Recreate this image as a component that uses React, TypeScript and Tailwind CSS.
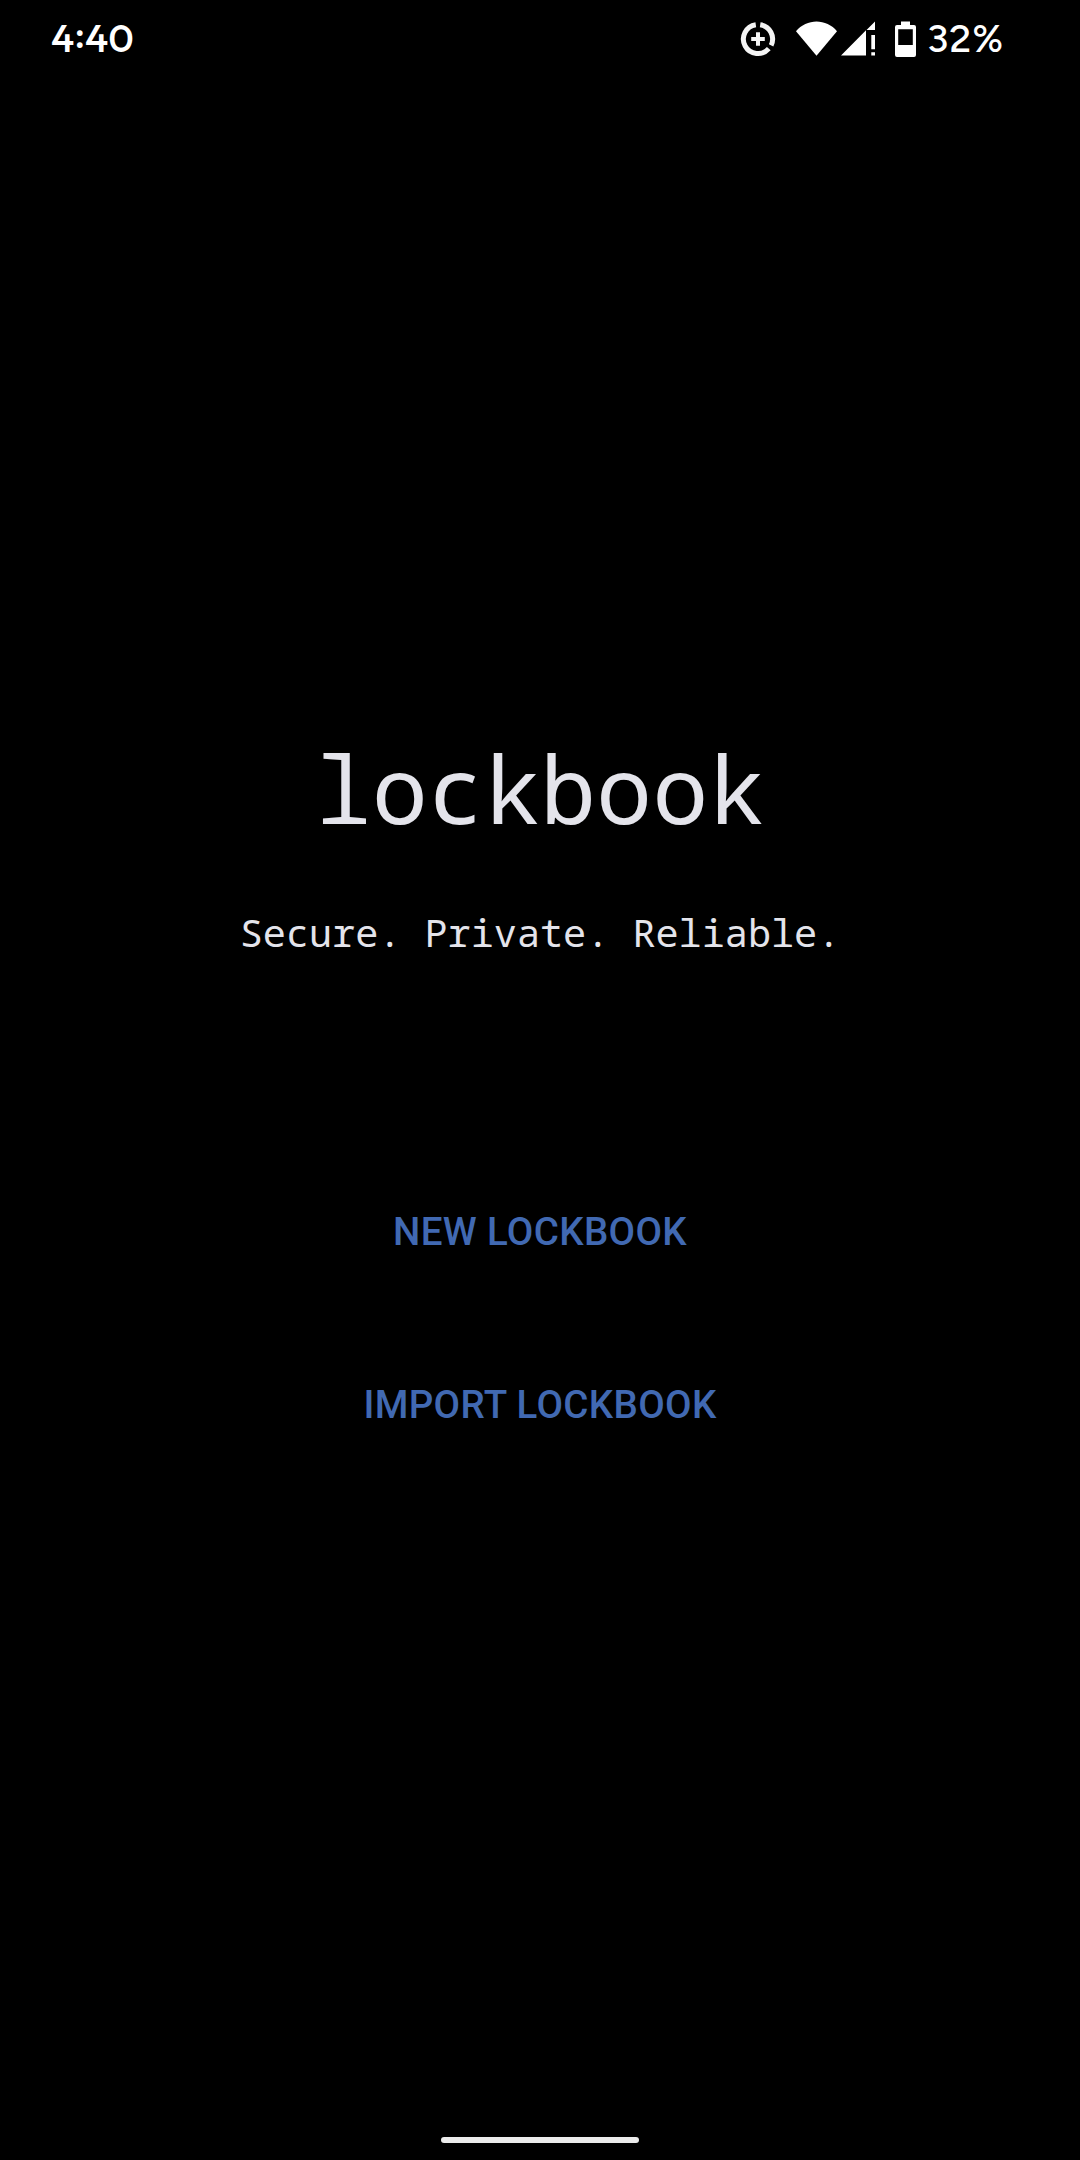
function DataSaverIcon() {
  return (
    <svg className="h-9 w-9" viewBox="0 0 36 36" fill="none" stroke="#f4f4f4">
      <path d="M20.2 3.7A14.5 14.5 0 0 1 31.1 24.4M28.8 27.6A14.5 14.5 0 1 1 15.8 3.7" strokeWidth="5" />
      <path d="M18 11.2V24.8M11.2 18H24.8" strokeWidth="4" />
    </svg>
  );
}

function WifiIcon() {
  return (
    <svg className="ml-5 h-9 w-[42px]" viewBox="0 0 42 36" fill="#fff">
      <path d="M0 10.2C5 4 13 .5 20.5 .5S36 4 41 10.2L20.5 34.8Z" />
    </svg>
  );
}

function SignalIcon() {
  return (
    <svg className="ml-[3px] h-9 w-[35px]" viewBox="0 0 35 36" fill="#fff">
      <path d="M0 34.6L25 9.2V34.6ZM25.5 9L34 .4V9Z" />
      <path d="M30.3 14H34V28.2H30.3ZM30.3 31.2H34V34.6H30.3Z" />
    </svg>
  );
}

function BatteryIcon() {
  return (
    <svg className="ml-[19px] h-9 w-[21px]" viewBox="0 0 21 36" fill="#fff" fillRule="evenodd">
      <path d="M6 .5H15V4H19Q21 4 21 6V34Q21 36 19 36H2Q0 36 0 34V6Q0 4 2 4H6ZM3.2 8.2V24H17.8V8.2Z" />
    </svg>
  );
}

export default function App() {
  return (
    <div className="flex h-[2160px] w-[1080px] flex-col items-center overflow-hidden bg-black">
      <header className="flex h-[78px] w-full shrink-0 items-center justify-between pl-[51px] text-[39px] leading-[76px] font-medium text-white">
        <div className="flex h-[78px] items-start font-['Outfit',sans-serif]">
          <span>4</span>
          <span className="-mt-1">:</span>
          <span>40</span>
        </div>
        <div className="flex h-full items-center">
          <DataSaverIcon />
          <WifiIcon />
          <SignalIcon />
          <BatteryIcon />
          <span className="ml-[11px] w-[153px] font-['Figtree',sans-serif] tracking-[0.9px] whitespace-nowrap">32%</span>
        </div>
      </header>
      <main className="flex w-full grow flex-col items-center pt-[648px]">
        <h1 className="font-['Noto_Sans_Mono',monospace] text-[93.5px] leading-[124px] text-[#e4e4eb]">lockbook</h1>
        <p className="mt-[56px] font-['Noto_Sans_Mono',monospace] text-[38.5px] leading-[52px] whitespace-nowrap text-[#e4e4eb]">
          Secure. Private. Reliable.
        </p>
        <button className="mt-[208px] h-[132px] font-['Roboto',sans-serif] text-[38.5px] font-medium tracking-[0.35px] text-[#4169b2]">
          NEW LOCKBOOK
        </button>
        <button className="mt-[41px] h-[132px] font-['Roboto',sans-serif] text-[38.5px] font-medium tracking-[0.35px] text-[#4169b2]">
          IMPORT LOCKBOOK
        </button>
      </main>
      <div className="mb-[17px] h-1.5 w-[198px] shrink-0 rounded-full bg-[#ebebeb]" />
    </div>
  );
}
